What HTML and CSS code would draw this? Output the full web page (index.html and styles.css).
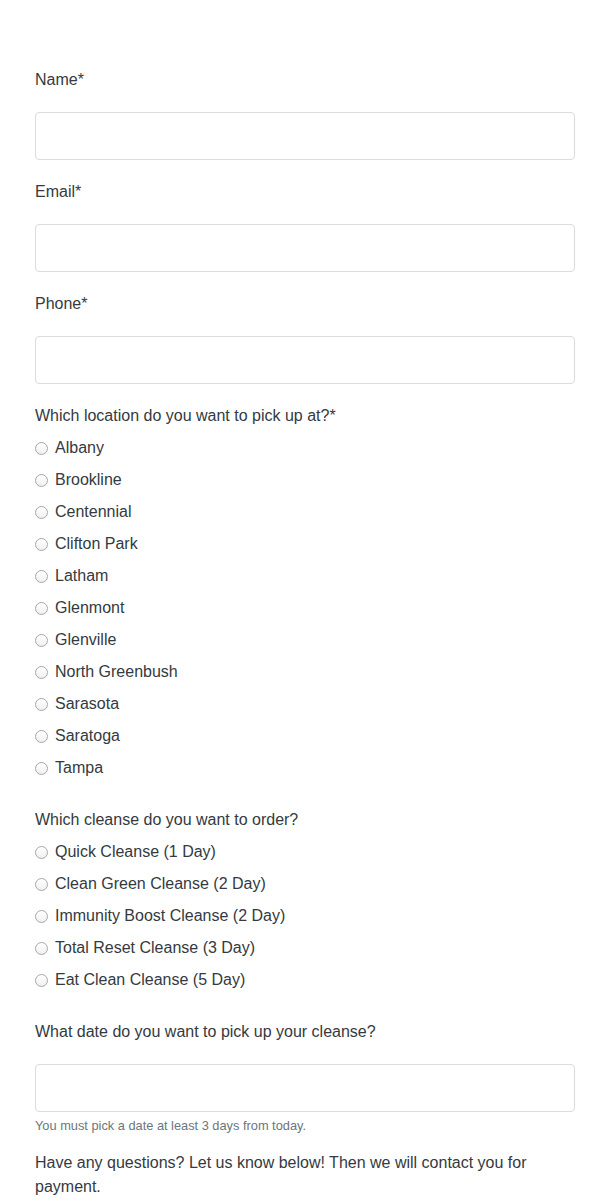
FILE: index.html
```html
<!DOCTYPE html>
<html>
<head>
<meta charset="utf-8">
<link rel="stylesheet" href="styles.css">
</head>
<body>
<form class="form">
  <div class="group">
    <label class="label" for="name">Name*</label>
    <input class="input" id="name" type="text">
  </div>
  <div class="group">
    <label class="label" for="email">Email*</label>
    <input class="input" id="email" type="text">
  </div>
  <div class="group">
    <label class="label" for="phone">Phone*</label>
    <input class="input" id="phone" type="text">
  </div>
  <div class="group group-radio">
    <div class="label label-radio">Which location do you want to pick up at?*</div>
    <label class="option"><input type="radio" name="loc" class="radio"><span>Albany</span></label>
    <label class="option"><input type="radio" name="loc" class="radio"><span>Brookline</span></label>
    <label class="option"><input type="radio" name="loc" class="radio"><span>Centennial</span></label>
    <label class="option"><input type="radio" name="loc" class="radio"><span>Clifton Park</span></label>
    <label class="option"><input type="radio" name="loc" class="radio"><span>Latham</span></label>
    <label class="option"><input type="radio" name="loc" class="radio"><span>Glenmont</span></label>
    <label class="option"><input type="radio" name="loc" class="radio"><span>Glenville</span></label>
    <label class="option"><input type="radio" name="loc" class="radio"><span>North Greenbush</span></label>
    <label class="option"><input type="radio" name="loc" class="radio"><span>Sarasota</span></label>
    <label class="option"><input type="radio" name="loc" class="radio"><span>Saratoga</span></label>
    <label class="option"><input type="radio" name="loc" class="radio"><span>Tampa</span></label>
  </div>
  <div class="group group-radio">
    <div class="label label-radio">Which cleanse do you want to order?</div>
    <label class="option"><input type="radio" name="cl" class="radio"><span>Quick Cleanse (1 Day)</span></label>
    <label class="option"><input type="radio" name="cl" class="radio"><span>Clean Green Cleanse (2 Day)</span></label>
    <label class="option"><input type="radio" name="cl" class="radio"><span>Immunity Boost Cleanse (2 Day)</span></label>
    <label class="option"><input type="radio" name="cl" class="radio"><span>Total Reset Cleanse (3 Day)</span></label>
    <label class="option"><input type="radio" name="cl" class="radio"><span>Eat Clean Cleanse (5 Day)</span></label>
  </div>
  <div class="group group-date">
    <label class="label" for="date">What date do you want to pick up your cleanse?</label>
    <input class="input" id="date" type="text">
    <small class="help">You must pick a date at least 3 days from today.</small>
  </div>
  <p class="note">Have any questions? Let us know below! Then we will contact you for payment.</p>
</form>
</body>
</html>
```
FILE: styles.css
```css
html, body {
  margin: 0;
  padding: 0;
  background: #fff;
}
body {
  font-family: "Liberation Sans", Arial, sans-serif;
  font-size: 16px;
  line-height: 24px;
  color: #343a40;
}
.form {
  width: 540px;
  padding: 68px 35px 0 35px;
}
.group {
  display: flex;
  flex-direction: column;
  margin-bottom: 20px;
}
.group-radio {
  margin-bottom: 28px;
}
.group-date {
  margin-bottom: 16px;
}
.label {
  display: block;
  margin-bottom: 20px;
}
.label-radio {
  margin-bottom: 8px;
}
.input {
  box-sizing: border-box;
  width: 540px;
  height: 48px;
  margin: 0;
  border: 1px solid #dcdcdc;
  border-radius: 4px;
  background: #fff;
  font: inherit;
  padding: 0 12px;
  outline: none;
}
.option {
  display: flex;
  align-items: center;
  height: 24px;
  margin-bottom: 8px;
}
.option:last-child {
  margin-bottom: 0;
}
.radio {
  appearance: none;
  -webkit-appearance: none;
  box-sizing: border-box;
  width: 13px;
  height: 13px;
  margin: 0 7px 0 0;
  flex: none;
  border: 1px solid #a8a8a8;
  border-radius: 50%;
  background: linear-gradient(#ffffff, #f0f0f0);
}
.help {
  display: block;
  margin-top: 4px;
  font-size: 12.8px;
  line-height: 19px;
  color: #6c757d;
}
.note {
  margin: 0;
  width: 520px;
}
```
